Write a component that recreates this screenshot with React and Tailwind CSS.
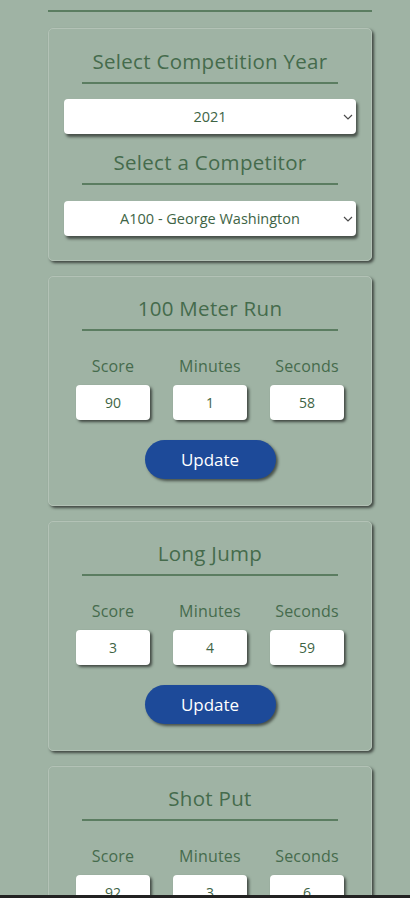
import React from 'react';

const events = [
  { name: '100 Meter Run', score: '90', minutes: '1', seconds: '58' },
  { name: 'Long Jump', score: '3', minutes: '4', seconds: '59' },
  { name: 'Shot Put', score: '92', minutes: '3', seconds: '6' },
];

function Chevron() {
  return (
    <svg className="absolute right-[3px] top-1/2 -translate-y-1/2" width="10" height="6" viewBox="0 0 10 6" fill="none">
      <path d="M1 1l4 4 4-4" stroke="#4b4b4b" strokeWidth="1.2" />
    </svg>
  );
}

function SelectBox({ value }) {
  return (
    <div className="relative mx-[15px] h-[35px] rounded-[4px] bg-white shadow-[2px_3px_3px_rgba(0,0,0,0.55)] flex items-center justify-center text-[14.5px] text-[#3e6445]">
      {value}
      <Chevron />
    </div>
  );
}

function Heading({ children }) {
  return (
    <>
      <h2 className="text-center text-[20.5px] leading-[28px] text-[#456b4c] tracking-[0.3px]">{children}</h2>
      <div className="mx-[33px] mt-[7px] h-[2px] bg-[#5b7d61]" />
    </>
  );
}

function EventCard({ ev }) {
  return (
    <div className="rounded-[5px] border border-[#b3c2b6] shadow-[2px_2px_3px_rgba(0,0,0,0.6)] pt-[17px] pb-[26px]">
      <Heading>{ev.name}</Heading>
      <div className="mt-[25px] flex justify-center gap-[23px]">
        {[['Score', ev.score], ['Minutes', ev.minutes], ['Seconds', ev.seconds]].map(([label, val]) => (
          <div key={label} className="w-[74px] flex flex-col items-center">
            <span className="text-[16px] leading-[20px] text-[#466b4d] tracking-[0.2px] whitespace-nowrap">{label}</span>
            <div className="mt-[9px] w-[74px] h-[35px] rounded-[4px] bg-white shadow-[2px_2px_3px_rgba(0,0,0,0.6)] flex items-center justify-center text-[14px] text-[#3e6445]">
              {val}
            </div>
          </div>
        ))}
      </div>
      <div className="mt-[20px] flex justify-center">
        <button className="w-[131px] h-[39px] rounded-full bg-[#1d4a99] text-white text-[17px] shadow-[2px_2px_3px_rgba(0,0,0,0.55)]">
          Update
        </button>
      </div>
    </div>
  );
}

export default function App() {
  return (
    <div className="bg-[#9fb3a4] font-['Open_Sans',sans-serif] relative overflow-hidden h-[898px]">
      <div className="ml-[48px] w-[324px] pt-[10px]">
        <div className="h-[2px] bg-[#5b7d61]" />
        <div className="mt-[16px] flex flex-col gap-[15px]">
          {/* selectors */}
          <div className="rounded-[5px] border border-[#b3c2b6] shadow-[2px_2px_3px_rgba(0,0,0,0.6)] pt-[18px] pb-[24px]">
            <Heading>Select Competition Year</Heading>
            <div className="mt-[15px]">
              <SelectBox value="2021" />
            </div>
            <div className="mt-[14px]">
              <Heading>Select a Competitor</Heading>
            </div>
            <div className="mt-[16px]">
              <SelectBox value="A100 - George Washington" />
            </div>
          </div>
          {events.map((ev) => (
            <EventCard key={ev.name} ev={ev} />
          ))}
        </div>
      </div>
      <div className="absolute bottom-0 left-0 right-0 h-[3px] bg-[#222]" />
    </div>
  );
}
